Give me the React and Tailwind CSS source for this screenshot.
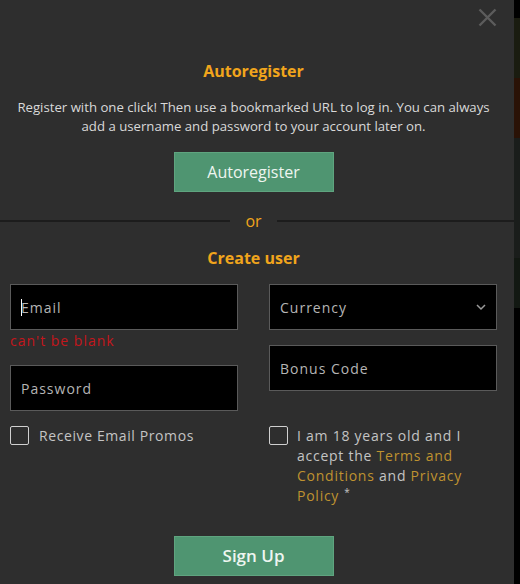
import React from "react";

export default function App() {
  const fieldFont = { fontFamily: '"Open Sans", sans-serif' };
  return (
    <div className="w-[520px] h-[584px] flex bg-black overflow-hidden" style={fieldFont}>
      <div className="w-[514px] h-[584px] bg-[#2e2e2e] relative flex flex-col shrink-0">
        <button className="absolute right-[17px] top-[3px]">
          <svg width="19" height="19" viewBox="0 0 19 19" className="mt-[5px]">
            <path d="M1.5 1.5 L17.5 17.5 M17.5 1.5 L1.5 17.5" stroke="#5c5c5c" strokeWidth="2.4" />
          </svg>
        </button>

        <div className="w-[507px] flex flex-col">
          <h2 className="mt-[60px] text-center text-[16px] leading-[22px] font-bold text-[#f1a51c]">Autoregister</h2>
          <p className="mt-[16px] text-center text-[13.2px] leading-[19px] text-[#d9d9d9]">
            Register with one click! Then use a bookmarked URL to log in. You can always
            <br />
            add a username and password to your account later on.
          </p>
          <div className="flex justify-center mt-[16px]">
            <button className="w-[160px] h-[40px] bg-[#4f9571] border border-[#5fa47f] text-[#eef5f0] text-[16px]">
              Autoregister
            </button>
          </div>
        </div>

        <div className="flex items-center mt-[18px] h-[22px]">
          <div className="w-[230px] h-[2px] bg-[#1c1c1c]" />
          <span className="w-[47px] text-center text-[16px] text-[#f1a51c] leading-[22px]">or</span>
          <div className="flex-1 h-[2px] bg-[#1c1c1c]" />
        </div>

        <div className="w-[507px] flex flex-col">
          <h2 className="mt-[15px] text-center text-[16px] leading-[22px] font-bold text-[#f1a51c]">Create user</h2>

          <div className="mt-[15px] px-[10px] grid grid-cols-2 gap-x-[31px]">
            <div className="flex flex-col">
              <div className="h-[46px] bg-black border border-[#5a5a5a] flex items-center px-[10px] text-[14px] tracking-[1px] text-[#b5b5b5]">
                <span className="w-[1px] h-[17px] bg-white mr-[-1px]" />
                <span>Email</span>
              </div>
              <div className="text-[14px] leading-[20px] tracking-[1px] text-[#c4161c] mt-[1px]">can't be blank</div>
              <div className="mt-[14px] h-[46px] bg-black border border-[#5a5a5a] flex items-center px-[10px] text-[14px] tracking-[1px] text-[#b5b5b5]">
                Password
              </div>
              <label className="mt-[15px] flex items-start gap-[10px]">
                <span className="w-[19px] h-[19px] border border-[#d0d0d0] rounded-[2px] shrink-0" />
                <span className="text-[14px] leading-[20px] tracking-[0.6px] text-[#c4c4c4]">Receive Email Promos</span>
              </label>
            </div>
            <div className="flex flex-col">
              <div className="h-[46px] bg-black border border-[#5a5a5a] flex items-center justify-between pl-[10px] pr-[10px] text-[14px] tracking-[1px] text-[#b5b5b5]">
                <span>Currency</span>
                <svg width="10" height="7" viewBox="0 0 10 7">
                  <path d="M1 1 L5 5 L9 1" fill="none" stroke="#9a9a9a" strokeWidth="1.5" />
                </svg>
              </div>
              <div className="mt-[15px] h-[46px] bg-black border border-[#5a5a5a] flex items-center px-[10px] text-[14px] tracking-[1px] text-[#b5b5b5]">
                Bonus Code
              </div>
              <label className="mt-[35px] flex items-start gap-[9px]">
                <span className="w-[19px] h-[19px] border border-[#d0d0d0] rounded-[2px] shrink-0" />
                <span className="text-[14px] leading-[20px] tracking-[0.75px] text-[#c4c4c4] w-[180px]">
                  I am 18 years old and I accept the{" "}
                  <span className="text-[#bf9230]">Terms and Conditions</span> and{" "}
                  <span className="text-[#bf9230]">Privacy Policy</span>
                  <span className="relative top-[-5px] ml-[5px] text-[10px]">*</span>
                </span>
              </label>
            </div>
          </div>

          <div className="flex justify-center mt-[29px]">
            <button className="w-[160px] h-[40px] bg-[#4f9571] border border-[#5fa47f] text-[#eef5f0] text-[17px] font-semibold">
              Sign Up
            </button>
          </div>
        </div>
      </div>
      <div className="flex-1 flex flex-col">
        <div className="h-[18px] bg-black" />
        <div className="h-[60px] bg-[#1a1c10]" />
        <div className="h-[60px] bg-[#2a1206]" />
        <div className="h-[120px] bg-[#1a1d1b]" />
        <div className="h-[50px] bg-[#121812]" />
        <div className="flex-1 bg-black" />
      </div>
    </div>
  );
}
